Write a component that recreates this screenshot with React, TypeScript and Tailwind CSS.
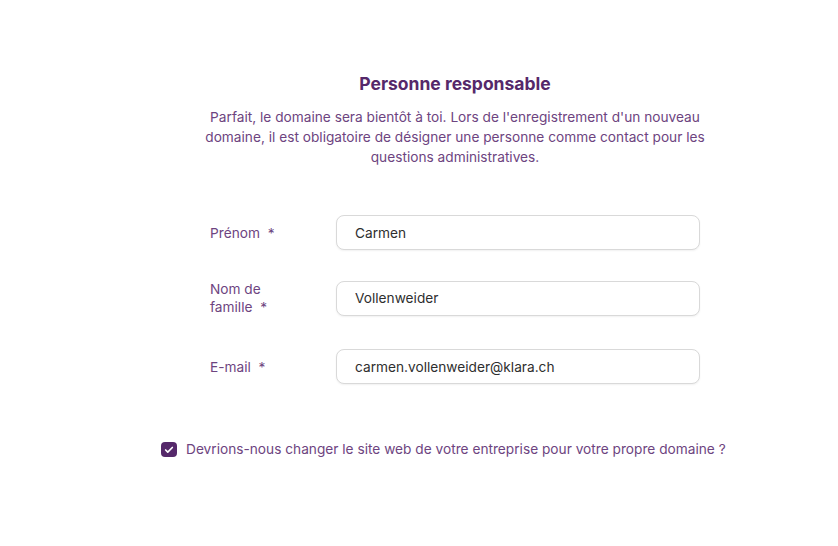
import { Check } from "lucide-react";

const fields = [
  { id: "first-name", label: "Prénom", value: "Carmen", gap: "mt-0" },
  { id: "last-name", label: "Nom de famille", value: "Vollenweider", gap: "mt-[30px]" },
  { id: "email", label: "E-mail", value: "carmen.vollenweider@klara.ch", gap: "mt-[33px]" },
];

export default function App() {
  return (
    <div className="h-[546px] w-full bg-white font-['Inter',sans-serif]">
      <div className="ml-[160px] flex w-[590px] flex-col items-center pt-[73px]">
        <h1 className="text-[17.5px] font-bold leading-[22px] text-[#55286a]">
          Personne responsable
        </h1>
        <p className="mt-[12px] w-[524px] text-center text-[13.7px] leading-[20px] text-[#6d4480]">
          Parfait, le domaine sera bientôt à toi. Lors de l'enregistrement d'un nouveau
          domaine, il est obligatoire de désigner une personne comme contact pour les
          questions administratives.
        </p>

        <form className="mt-[48px] flex w-[490px] flex-col">
          {fields.map((f) => (
            <div key={f.id} className={`${f.gap} flex items-center`}>
              <label
                htmlFor={f.id}
                className="w-[80px] whitespace-pre-line text-[13.7px] leading-[18px] text-[#6d4480]"
              >
                {`${f.label}\u00a0\u00a0*`}
              </label>
              <input
                id={f.id}
                defaultValue={f.value}
                className="ml-[46px] h-[35px] w-[364px] rounded-[8px] border border-[#d9d9d9] bg-white px-[18px] text-[13.7px] text-[#2e2e2e] shadow-[0_1px_2px_rgba(0,0,0,0.06)] outline-none"
              />
            </div>
          ))}
        </form>

        <label className="mt-[57px] flex w-full items-center gap-[9px] self-start pl-[1px]">
          <span className="flex h-[15px] w-[16px] items-center justify-center rounded-[4px] bg-[#55286a]">
            <Check className="h-[10px] w-[10px] text-white" strokeWidth={4} />
          </span>
          <span className="whitespace-nowrap text-[13.7px] leading-[17px] text-[#6d4480]">
            Devrions-nous changer le site web de votre entreprise pour votre propre domaine ?
          </span>
        </label>
      </div>
    </div>
  );
}
